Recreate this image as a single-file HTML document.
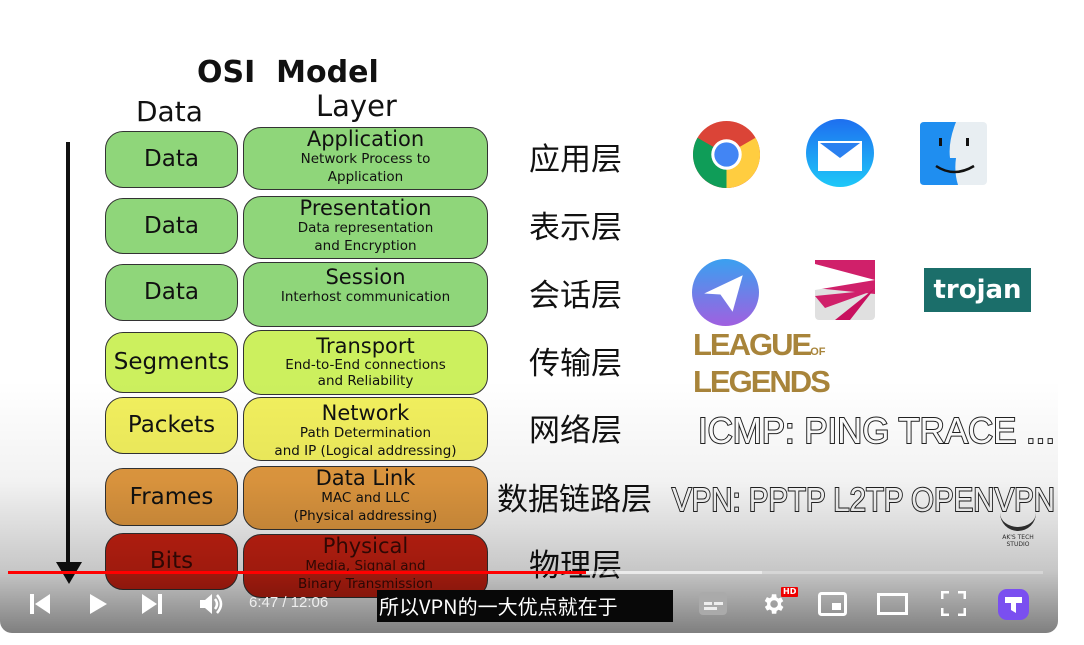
<!DOCTYPE html>
<html><head><meta charset="utf-8"><style>
*{margin:0;padding:0;box-sizing:border-box}
body{width:1084px;height:645px;background:#fff;position:relative;overflow:hidden;font-family:"DejaVu Sans","Noto Sans CJK SC",sans-serif}
#v{position:absolute;left:0;top:0;width:1058px;height:633px;background:#fff;border-radius:0 0 12px 12px;overflow:hidden}
.b{position:absolute;border:1.5px solid #333;border-radius:18px;text-align:center;color:#111;line-height:1}
.l{font-size:23px;display:flex;align-items:center;justify-content:center}
.r .t{font-size:21px;margin-top:1px}
.r .s{font-size:13.5px;line-height:18px}
.g{background:#8fd67a}.y1{background:#ccf05e}.y2{background:#f2f05e}.o{background:#e39a40}.rd{background:#cc2212}
.cn{position:absolute;font-family:"Noto Sans CJK SC",sans-serif;font-size:31px;color:#111;line-height:1}
#ov{position:absolute;left:0;top:380px;width:100%;height:253px;background:linear-gradient(rgba(0,0,0,0),rgba(0,0,0,0.05) 40%,rgba(0,0,0,0.22) 75%,rgba(0,0,0,0.5))}
.ic{position:absolute}
</style></head><body>
<div id="v">
<div style="position:absolute;left:197px;top:55px;font-size:30px;font-weight:bold;color:#111;white-space:nowrap">OSI&nbsp; Model</div>
<div style="position:absolute;left:136px;top:95px;font-size:28px;color:#111">Data</div>
<div style="position:absolute;left:316px;top:89px;font-size:29px;color:#111">Layer</div>
<div style="position:absolute;left:66px;top:142px;width:4px;height:428px;background:#111"></div>
<div style="position:absolute;left:56px;top:562px;width:0;height:0;border-left:13px solid transparent;border-right:13px solid transparent;border-top:22px solid #111"></div>

<div class="b l g" style="left:105px;top:131px;width:133px;height:57px">Data</div>
<div class="b r g" style="left:243px;top:127px;width:245px;height:63px"><div class="t">Application</div><div class="s">Network Process to<br>Application</div></div>
<div class="b l g" style="left:105px;top:198px;width:133px;height:56px">Data</div>
<div class="b r g" style="left:243px;top:196px;width:245px;height:63px"><div class="t">Presentation</div><div class="s">Data representation<br>and Encryption</div></div>
<div class="b l g" style="left:105px;top:264px;width:133px;height:57px">Data</div>
<div class="b r g" style="left:243px;top:262px;width:245px;height:65px"><div class="t" style="margin-top:4px">Session</div><div class="s">Interhost communication</div></div>
<div class="b l y1" style="left:105px;top:332px;width:133px;height:61px">Segments</div>
<div class="b r y1" style="left:243px;top:330px;width:245px;height:65px"><div class="t" style="margin-top:5px">Transport</div><div class="s" style="line-height:16px">End-to-End connections<br>and Reliability</div></div>
<div class="b l y2" style="left:105px;top:397px;width:133px;height:57px">Packets</div>
<div class="b r y2" style="left:243px;top:397px;width:245px;height:64px"><div class="t" style="margin-top:5px">Network</div><div class="s" style="line-height:18px">Path Determination<br>and IP (Logical addressing)</div></div>
<div class="b l o" style="left:105px;top:468px;width:133px;height:58px">Frames</div>
<div class="b r o" style="left:243px;top:466px;width:245px;height:64px"><div class="t">Data Link</div><div class="s">MAC and LLC<br>(Physical addressing)</div></div>
<div class="b l rd" style="left:105px;top:533px;width:133px;height:57px;color:#3a0a05">Bits</div>
<div class="b r rd" style="left:243px;top:534px;width:245px;height:64px;color:#3a0a05"><div class="t">Physical</div><div class="s">Media, Signal and<br>Binary Transmission</div></div>

<div class="cn" style="left:529px;top:141px">应用层</div>
<div class="cn" style="left:529px;top:209px">表示层</div>
<div class="cn" style="left:529px;top:277px">会话层</div>
<div class="cn" style="left:529px;top:345px">传输层</div>
<div class="cn" style="left:529px;top:412px">网络层</div>
<div class="cn" style="left:497px;top:481px">数据链路层</div>
<div class="cn" style="left:529px;top:547px">物理层</div>

<svg class="ic" style="left:693px;top:121px" width="67" height="67" viewBox="0 0 66 66">
<circle cx="33" cy="33" r="33" fill="#db4437"/>
<path d="M33 33 L4.4 16.5 A33 33 0 0 0 33 66 Z" fill="#0f9d58"/>
<path d="M33 33 L33 66 A33 33 0 0 0 61.6 16.5 Z" fill="#ffcd40"/>
<circle cx="33" cy="33" r="15" fill="#fff"/><circle cx="33" cy="33" r="12" fill="#4285f4"/></svg>
<svg class="ic" style="left:806px;top:119px" width="68" height="68" viewBox="0 0 68 68">
<defs><linearGradient id="mg" x1="0" y1="0" x2="0" y2="1"><stop offset="0" stop-color="#1e6ff0"/><stop offset="1" stop-color="#1ec8f8"/></linearGradient></defs>
<circle cx="34" cy="34" r="34" fill="url(#mg)"/><rect x="12" y="22" width="44" height="30" fill="#fff"/><path d="M14 24 L34 39 L54 24" fill="#2a80f0"/></svg>
<svg class="ic" style="left:920px;top:122px" width="67" height="63" viewBox="0 0 67 63">
<rect width="67" height="63" rx="4" fill="#e8eef2"/><path d="M4 0 H36 Q28 20 30 36 H36 Q34 50 38 63 H4 Q0 63 0 59 V4 Q0 0 4 0Z" fill="#1f8ef0"/>
<path d="M16 44 Q34 56 54 44" stroke="#111" stroke-width="2.5" fill="none"/><rect x="19" y="16" width="3" height="8" fill="#111"/><rect x="46" y="16" width="3" height="8" fill="#111"/></svg>
<svg class="ic" style="left:692px;top:259px" width="67" height="67" viewBox="0 0 66 66">
<defs><linearGradient id="tg" x1="0" y1="0" x2="0" y2="1"><stop offset="0" stop-color="#3aa0f0"/><stop offset="1" stop-color="#a060e0"/></linearGradient></defs>
<circle cx="33" cy="33" r="33" fill="url(#tg)"/><path d="M50 16 L12 34 L28 35 L40 52 Z" fill="#fff"/></svg>
<svg class="ic" style="left:815px;top:260px" width="60" height="60" viewBox="0 0 60 60">
<rect width="60" height="60" rx="4" fill="#e0e0e0"/><path d="M0 0 H60 V34 L0 28 Z" fill="#d0206a"/><path d="M0 4 L60 20 L0 30Z" fill="#fff"/><path d="M0 36 L60 30 L10 48 Z" fill="#d0206a"/><path d="M20 60 L60 28 L35 60Z" fill="#c8105e"/></svg>
<div style="position:absolute;left:924px;top:268px;width:107px;height:44px;background:#1b6e6a;color:#fff;font-family:'DejaVu Sans',sans-serif;font-weight:bold;font-size:26px;text-align:center;line-height:44px">trojan</div>
<div style="position:absolute;left:693px;top:330px;font-family:'Liberation Sans',sans-serif;font-weight:bold;font-size:31px;line-height:29px;color:#a8843a;letter-spacing:-2px;white-space:nowrap">LEAGUE<span style="font-size:11px;letter-spacing:0">OF</span><br>LEGENDS</div>

<svg class="ic" style="left:0;top:0" width="1058" height="633">
<text x="698" y="443" textLength="357" lengthAdjust="spacingAndGlyphs" font-family="Liberation Sans, sans-serif" font-size="36" fill="#fff" stroke="#222" stroke-width="2" paint-order="stroke">ICMP: PING TRACE ...</text>
<text x="672" y="511" textLength="383" lengthAdjust="spacingAndGlyphs" font-family="Liberation Sans, sans-serif" font-size="33" fill="#fff" stroke="#222" stroke-width="2" paint-order="stroke">VPN: PPTP L2TP OPENVPN</text>
</svg>
<div style="position:absolute;left:995px;top:513px;width:46px;font-size:6px;color:#333;text-align:center;line-height:7px"><div style="height:18px;margin:0 auto 3px;width:36px;border-bottom:4px solid #333;border-radius:0 0 20px 20px"></div>AK'S TECH<br>STUDIO</div>

<div id="ov"></div>
<div style="position:absolute;left:8px;top:571px;width:1035px;height:3px;background:rgba(255,255,255,0.3)"></div>
<div style="position:absolute;left:8px;top:571px;width:754px;height:3px;background:rgba(255,255,255,0.5)"></div>
<div style="position:absolute;left:8px;top:571px;width:578px;height:3px;background:#f00"></div>

<svg class="ic" style="left:28px;top:592px" width="24" height="24"><rect x="2" y="2" width="4" height="20" fill="#fff"/><path d="M22 2 V22 L7 12Z" fill="#fff"/></svg>
<svg class="ic" style="left:88px;top:592px" width="24" height="24"><path d="M2 2 V22 L19 12Z" fill="#fff"/></svg>
<svg class="ic" style="left:140px;top:592px" width="24" height="24"><path d="M2 2 V22 L17 12Z" fill="#fff"/><rect x="18" y="2" width="4" height="20" fill="#fff"/></svg>
<svg class="ic" style="left:199px;top:592px" width="26" height="24"><path d="M1 8 H6 L13 2 V22 L6 16 H1Z" fill="#fff"/><path d="M16 7 Q20 12 16 17" stroke="#fff" stroke-width="2.5" fill="none"/><path d="M18 3 Q26 12 18 21" stroke="#fff" stroke-width="2.5" fill="none"/></svg>
<div style="position:absolute;left:249px;top:594px;color:#eee;font-family:'Liberation Sans',sans-serif;font-size:15px">6:47 / 12:06</div>
<div style="position:absolute;left:377px;top:590px;width:296px;height:32px;background:#080808;color:#fff;font-family:'Noto Sans CJK SC',sans-serif;font-size:20px;line-height:32px;padding-left:2px;white-space:nowrap">所以VPN的一大优点就在于</div>
<svg class="ic" style="left:699px;top:592px" width="30" height="24"><rect x="0" y="0" width="28" height="23" rx="4" fill="#aaa"/><rect x="5" y="10" width="8" height="3" fill="#eee"/><rect x="15" y="10" width="9" height="3" fill="#eee"/><rect x="5" y="15" width="13" height="3" fill="#eee"/></svg>
<svg class="ic" style="left:760px;top:591px" width="26" height="26" viewBox="0 0 24 24"><path fill="#fff" d="M19.4 13a7.5 7.5 0 0 0 0-2l2.1-1.6-2-3.5-2.5 1a7 7 0 0 0-1.700-1L15 3h-4l-.4 2.7a7 7 0 0 0-1.7 1l-2.5-1-2 3.5L6.6 11a7.5 7.5 0 0 0 0 2l-2.1 1.6 2 3.5 2.5-1a7 7 0 0 0 1.7 1L11 21h4l.4-2.7a7 7 0 0 0 1.7-1l2.5 1 2-3.5zM13 15.5a3.5 3.5 0 1 1 0-7 3.5 3.5 0 0 1 0 7z"/></svg>
<div style="position:absolute;left:781px;top:587px;background:#e00;color:#fff;font-size:8px;font-weight:bold;padding:0 2px;line-height:10px;border-radius:1px">HD</div>
<svg class="ic" style="left:818px;top:592px" width="30" height="24"><rect x="1.5" y="1.5" width="26" height="21" rx="2" stroke="#fff" stroke-width="3" fill="none"/><rect x="14" y="11" width="9" height="7" fill="#fff"/></svg>
<svg class="ic" style="left:877px;top:593px" width="32" height="22"><rect x="1.5" y="1.5" width="28" height="19" stroke="#fff" stroke-width="3" fill="none"/></svg>
<svg class="ic" style="left:941px;top:591px" width="25" height="25"><path d="M1 8 V1 H8 M17 1 H24 V8 M24 17 V24 H17 M8 24 H1 V17" stroke="#fff" stroke-width="3" fill="none"/></svg>
<svg class="ic" style="left:998px;top:589px" width="31" height="31"><rect width="31" height="31" rx="9" fill="#7a4ff0"/><path d="M7 8 H24 V14 H18 V24 L13 21 V14 H7Z" fill="#fff"/></svg>
</div>
</body></html>
